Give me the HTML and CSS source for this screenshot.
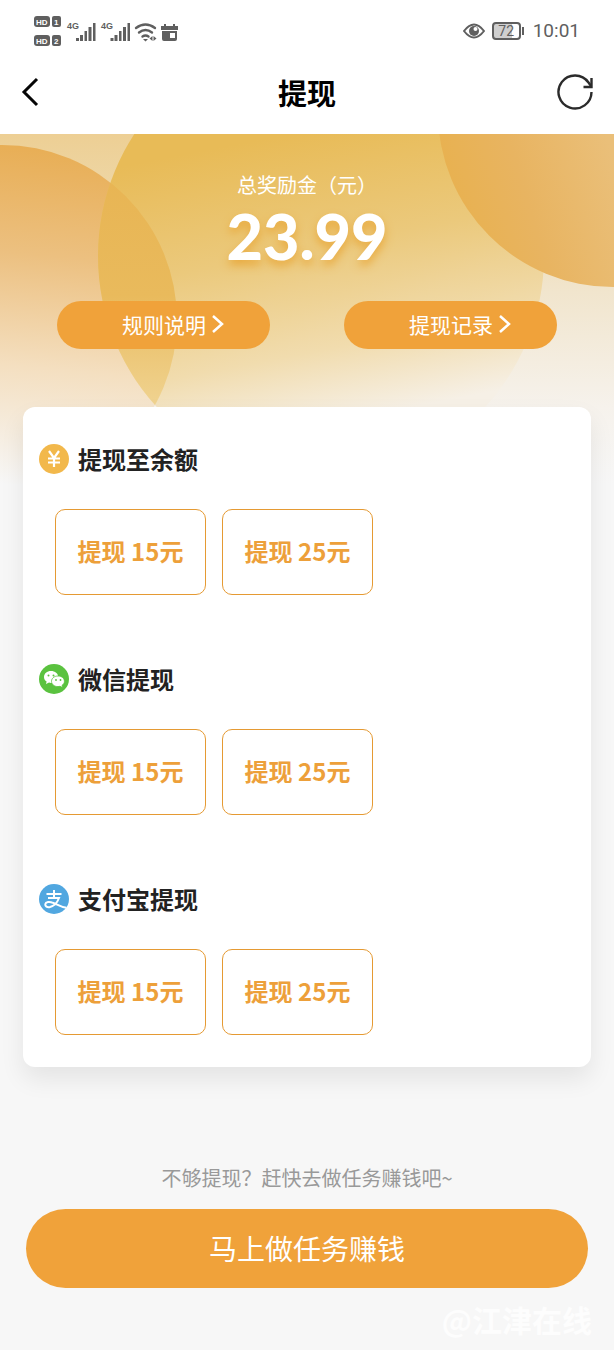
FILE: index.html
```html
<!DOCTYPE html>
<html lang="zh-CN">
<head>
<meta charset="utf-8">
<meta name="viewport" content="width=device-width, initial-scale=1">
<title>提现</title>
<link rel="stylesheet" href="styles.css">
</head>
<body>
<div class="status">
  <svg class="status-left" viewBox="0 0 150 36" width="150" height="36" aria-hidden="true">
    <g fill="#5f5f5f">
      <rect x="1" y="3" width="16" height="11" rx="3"/><rect x="19" y="3" width="9" height="11" rx="2"/>
      <rect x="1" y="22" width="16" height="11" rx="3"/><rect x="19" y="22" width="9" height="11" rx="2"/>
    </g>
    <g class="badge-text"><text x="3" y="12">HD</text><text x="21" y="12">1</text><text x="3" y="31">HD</text><text x="21" y="31">2</text></g>
    <g class="net-text"><text x="34" y="16">4G</text><text x="68" y="16">4G</text></g>
    <g fill="#5f5f5f">
      <path id="bars" d="M43 25h3v3h-3zM47 22h3v6h-3zM51.500 18h2.500v10h-2.500zM55.500 14h3v14h-3zM60 10h2.500v18h-2.500z"/>
      <use href="#bars" x="34.500"/>
    </g>
    <g fill="none" stroke="#5f5f5f" stroke-width="2.400" stroke-linecap="round">
      <path d="M103 15q9.500-7 19 0M106 19.500q6.500-5 13 0M109.500 23.500q3-2 6 0"/>
    </g>
    <path fill="#5f5f5f" d="M110 26h5l-2.500 2.500zM119.500 23v5l-3-2.500zM120.500 23v5l3-2.500z"/>
    <path fill="#5f5f5f" fill-rule="evenodd" d="M128 13h3v-2h2v2h7v-2h2v2h3v4h-17zM129 18h15v8q0 2-2 2h-11q-2 0-2-2zM137 20v5h5v-5z"/>
  </svg>
  <div class="status-right">
    <svg viewBox="0 0 22 16" width="22" height="16" aria-hidden="true"><path d="M1 8q10-13 20 0q-10 13-20 0z" fill="none" stroke="#5f5f5f" stroke-width="2"/><circle cx="11" cy="8" r="5" fill="#5f5f5f"/><circle cx="12.500" cy="6" r="2" fill="#fff"/></svg>
    <span class="battery">72</span>
    <time>10:01</time>
  </div>
</div>
<header class="nav">
  <button class="icon-button" aria-label="返回"><svg viewBox="0 0 20 30" width="20" height="30"><path d="M17 2L4 15l13 13" fill="none" stroke="#050505" stroke-width="3"/></svg></button>
  <h1>提现</h1>
  <button class="icon-button" aria-label="刷新"><svg viewBox="0 0 38 38" width="38" height="38"><path d="M35.500 19A16.500 16.500 0 1 1 32.500 9.500L35 13" fill="none" stroke="#2b2b2b" stroke-width="2.400"/><path d="M35.500 5v9h-8" fill="none" stroke="#2b2b2b" stroke-width="2.400"/></svg></button>
</header>
<main class="content">
  <svg class="backdrop" viewBox="0 134 614 350" aria-hidden="true">
    <defs>
      <linearGradient id="base" gradientUnits="userSpaceOnUse" x1="0" y1="134" x2="0" y2="484"><stop offset="0" stop-color="#edcf94"/><stop offset=".2" stop-color="#eed8aa"/><stop offset=".45" stop-color="#f1e5cd"/><stop offset=".78" stop-color="#f6f2ec"/><stop offset="1" stop-color="#f7f7f7"/></linearGradient>
      <linearGradient id="leftFill" gradientUnits="userSpaceOnUse" x1="30" y1="145" x2="0" y2="484"><stop offset="0" stop-color="#e8ae55"/><stop offset=".32" stop-color="#ecc080"/><stop offset=".65" stop-color="#f4dfc0"/><stop offset="1" stop-color="#f7f7f7"/></linearGradient>
      <linearGradient id="midFill" gradientUnits="userSpaceOnUse" x1="290" y1="134" x2="345" y2="420"><stop offset="0" stop-color="#e8bb57"/><stop offset=".4" stop-color="#ebc97c"/><stop offset=".75" stop-color="#f1dcae"/><stop offset="1" stop-color="#f6f0e6"/></linearGradient>
      <linearGradient id="lensFill" gradientUnits="userSpaceOnUse" x1="0" y1="180" x2="0" y2="410"><stop offset="0" stop-color="#e8b554"/><stop offset=".5" stop-color="#e9ba5c"/><stop offset="1" stop-color="#f0d493"/></linearGradient>
      <linearGradient id="rightFill" gradientUnits="userSpaceOnUse" x1="450" y1="210" x2="614" y2="160"><stop offset="0" stop-color="#e8b14f"/><stop offset=".45" stop-color="#e8b461"/><stop offset="1" stop-color="#eabf79"/></linearGradient>
      <clipPath id="leftClip"><circle cx="2" cy="320" r="175"/></clipPath>
    </defs>
    <rect y="134" width="614" height="350" fill="url(#base)"/>
    <circle cx="2" cy="320" r="175" fill="url(#leftFill)"/>
    <circle cx="321" cy="256" r="223" fill="url(#midFill)"/>
    <circle cx="321" cy="256" r="223" fill="url(#lensFill)" clip-path="url(#leftClip)"/>
    <circle cx="613" cy="112" r="175" fill="url(#rightFill)"/>
  </svg>
  <section class="summary">
    <p class="summary-label">总奖励金（元）</p>
    <p class="amount">23.99</p>
    <div class="links">
      <button class="pill">规则说明<svg viewBox="0 0 14 20" width="14" height="20"><path d="M2 2l9 8-9 8" fill="none" stroke="currentColor" stroke-width="2.500"/></svg></button>
      <button class="pill">提现记录<svg viewBox="0 0 14 20" width="14" height="20"><path d="M2 2l9 8-9 8" fill="none" stroke="currentColor" stroke-width="2.500"/></svg></button>
    </div>
  </section>
  <div class="card">
    <section>
      <h2><svg viewBox="0 0 30 30" width="30" height="30"><circle cx="15" cy="15" r="15" fill="#f2b84b"/><path d="M10 7l5 7 5-7M15 14v9M9 14.500h12M9 18.500h12" fill="none" stroke="#fff" stroke-width="2.200"/></svg>提现至余额</h2>
      <div class="options"><button class="option">提现 15元</button><button class="option">提现 25元</button></div>
    </section>
    <section>
      <h2><svg viewBox="0 0 30 30" width="30" height="30"><circle cx="15" cy="15" r="15" fill="#5ac23f"/><path d="M12 7c-4 0-7 2.600-7 6 0 2 1 3.600 2.600 4.600L7 20l3-1.500 2 .4c4 0 7.200-2.700 7.200-6S16 7 12 7z" fill="#fff"/><path d="M19 12c-3.700 0-6.500 2.300-6.500 5.300s2.800 5.300 6.500 5.300l2-.3 2.600 1.300-.6-2.200c1.500-1 2.400-2.400 2.400-4.100 0-3-2.800-5.300-6.400-5.300z" fill="#fff" stroke="#5ac23f" stroke-width=".8"/><g fill="#5ac23f"><circle cx="9.500" cy="11.500" r="1"/><circle cx="14.500" cy="11.500" r="1"/><circle cx="17" cy="16" r=".9"/><circle cx="21.500" cy="16" r=".9"/></g></svg>微信提现</h2>
      <div class="options"><button class="option">提现 15元</button><button class="option">提现 25元</button></div>
    </section>
    <section>
      <h2><svg viewBox="0 0 30 30" width="30" height="30"><circle cx="15" cy="15" r="15" fill="#51a7e0"/><path d="M7.500 10h15M15 6v8M9 14h11c-1.500 4-5 8-9 9-3 .6-5-.8-4.700-2.900.4-2.300 4.200-2.800 7.700-1.300 4 1.600 8 4.400 13.500 5" fill="none" stroke="#fff" stroke-width="2"/></svg>支付宝提现</h2>
      <div class="options"><button class="option">提现 15元</button><button class="option">提现 25元</button></div>
    </section>
  </div>
  <p class="hint">不够提现？赶快去做任务赚钱吧~</p>
  <button class="cta">马上做任务赚钱</button>
  <p class="watermark">@江津在线</p>
</main>
</body>
</html>
```
FILE: styles.css
```css
* { box-sizing: border-box; }
body {
  margin: 0;
  background: #f7f7f7;
  color: #222;
  font-family: "Noto Sans CJK SC", sans-serif;
}
h1, h2, p { margin: 0; }
button {
  border: 0;
  padding: 0;
  background: none;
  color: inherit;
  font: inherit;
  cursor: pointer;
}
svg { display: block; flex: none; }

.status {
  display: flex;
  align-items: center;
  justify-content: space-between;
  height: 62px;
  padding: 0 34px 0 33px;
  background: #fff;
  color: #5f5f5f;
}
.badge-text { fill: #fff; font: bold 8px "Liberation Sans", sans-serif; }
.net-text { fill: #5f5f5f; font: bold 9px "Liberation Sans", sans-serif; }
.status-right {
  display: flex;
  align-items: center;
  gap: 7px;
  font-family: Roboto, sans-serif;
  font-size: 19px;
  line-height: 24px;
}
.battery {
  position: relative;
  width: 29px;
  height: 18px;
  margin-right: 5px;
  border: 2px solid #5f5f5f;
  border-radius: 4px;
  background: linear-gradient(90deg, #cfcfcf 72%, #fff 72%);
  font-size: 14px;
  line-height: 14px;
  text-align: center;
}
.battery::after {
  content: "";
  position: absolute;
  top: 3px;
  right: -5px;
  width: 2px;
  height: 8px;
  background: #5f5f5f;
}

.nav {
  display: flex;
  align-items: center;
  justify-content: space-between;
  height: 72px;
  padding: 0 20px 12px;
  background: #fff;
}
.nav h1 { color: #000; font-size: 29px; line-height: 40px; font-weight: 700; }
.icon-button { display: flex; width: 38px; }

.content {
  position: relative;
  display: flex;
  flex-direction: column;
}
.backdrop {
  position: absolute;
  z-index: -1;
  top: 0;
  left: 0;
  width: 100%;
}
.summary {
  padding: 38px 57px 0;
  color: #fff;
  text-align: center;
}
.summary-label { font-size: 20px; line-height: 26px; }
.amount {
  font-family: Lato, sans-serif;
  font-size: 63px;
  font-weight: 900;
  line-height: 76px;
  text-shadow: 0 5px 10px #e9a93c;
}
.links {
  display: flex;
  justify-content: space-between;
  gap: 74px;
  padding-top: 27px;
}
.pill {
  display: flex;
  flex: 1;
  align-items: center;
  justify-content: center;
  gap: 5px;
  height: 48px;
  padding: 0 0 2px 20px;
  border-radius: 24px;
  background: #f0a23a;
  font-size: 21px;
}

.card {
  display: flex;
  flex-direction: column;
  gap: 66px;
  margin: 58px 23px 0;
  padding: 34px 16px 32px;
  border-radius: 12px;
  background: #fff;
  box-shadow: 0 12px 24px rgba(0, 0, 0, 0.08);
}
.card h2 {
  display: flex;
  align-items: center;
  gap: 9px;
  font-size: 24px;
  line-height: 36px;
}
.options {
  display: flex;
  flex-wrap: wrap;
  gap: 16px;
  padding: 32px 16px 0;
}
.option {
  width: 151px;
  height: 86px;
  padding-bottom: 4px;
  border: 1px solid #e59a33;
  border-radius: 10px;
  color: #eda03a;
  font-size: 24px;
  font-weight: 700;
}

.hint {
  padding-top: 96px;
  color: #999;
  font-size: 20px;
  line-height: 30px;
  text-align: center;
}
.cta {
  height: 79px;
  margin: 16px 26px 0;
  padding-bottom: 2px;
  border-radius: 40px;
  background: #f0a23a;
  color: #fff;
  font-size: 28px;
}
.watermark {
  padding: 11px 22px 0;
  color: #fdfdfd;
  font-size: 30px;
  font-weight: 700;
  line-height: 40px;
  text-align: right;
}
```
